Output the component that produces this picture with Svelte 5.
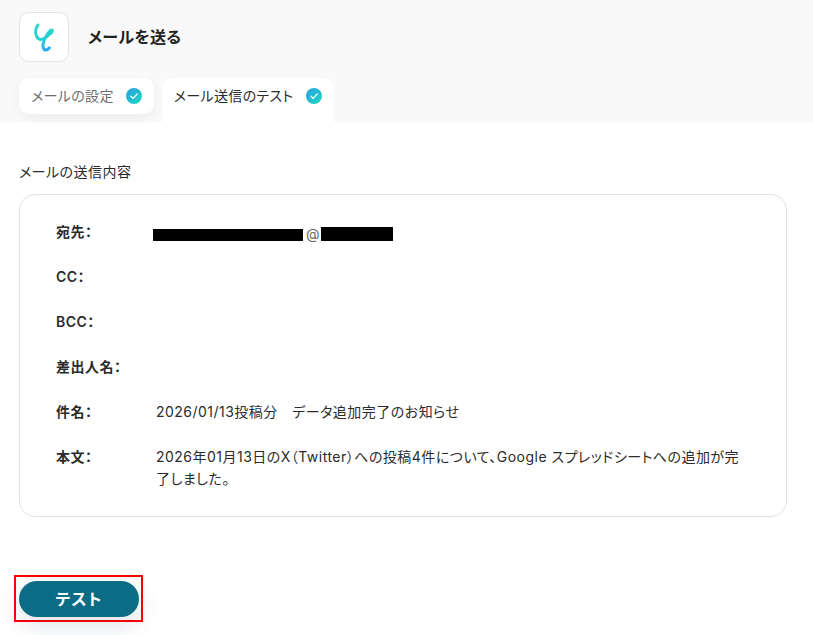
<script lang="ts">
	let rows = [
		{ label: "宛先：", value: "", redacted: true },
		{ label: "CC：", value: "" },
		{ label: "BCC：", value: "" },
		{ label: "差出人名：", value: "" },
		{ label: "件名：", value: "2026/01/13投稿分　データ追加完了のお知らせ" },
		{
			label: "本文：",
			value: "2026年01月13日のX（Twitter）への投稿4件について、Google スプレッドシートへの追加が完了しました。",
		},
	];
</script>

<svg class="defs" width="0" height="0" aria-hidden="true">
	<defs>
		<linearGradient id="check" x1="0" y1="0" x2="1" y2="1">
			<stop offset="0" stop-color="#2a9fe2" />
			<stop offset="1" stop-color="#1ddcc0" />
		</linearGradient>
		<linearGradient id="logo" x1="0" y1="0" x2="0" y2="1">
			<stop offset="0" stop-color="#2ed8c8" />
			<stop offset="0.65" stop-color="#22cfd8" />
			<stop offset="1" stop-color="#22a8f0" />
		</linearGradient>
	</defs>
</svg>

<div class="page">
	<header class="head">
		<div class="title-row">
			<div class="logo">
				<svg width="28" height="32" viewBox="0 0 28 32" fill="none">
					<path
						d="M8 4C5.5 7 4.5 12 7 16C9 19.5 13 19 17 15.5C20.5 12.5 23.5 10 22 9C20 8 14.5 17 13.2 22.5C12.4 26 13.5 29 15.5 29C17 29 18.5 28 19.5 26.8"
						stroke="url(#logo)"
						stroke-width="3"
						stroke-linecap="round"
						stroke-linejoin="round"
					/>
				</svg>
			</div>
			<h1>メールを送る</h1>
		</div>
		<div class="tabs">
			<div class="tab">
				<span>メールの設定</span>
				{@render checkmark()}
			</div>
			<div class="tab active">
				<span>メール送信のテスト</span>
				{@render checkmark()}
			</div>
		</div>
	</header>

	<main class="body">
		<h2>メールの送信内容</h2>
		<div class="card">
			{#each rows as row}
				<div class="row">
					<div class="label">{row.label}</div>
					<div class="value">
						{#if row.redacted}
							<span class="mask">
								<span class="bar first"></span>
								<span class="at">@</span>
								<span class="bar second"></span>
							</span>
						{:else}
							{row.value}
						{/if}
					</div>
				</div>
			{/each}
		</div>
		<div class="actions">
			<div class="outline">
				<button class="test">テスト</button>
			</div>
		</div>
	</main>
</div>

{#snippet checkmark()}
	<svg class="check" width="16" height="16" viewBox="0 0 16 16" fill="none">
		<circle cx="8" cy="8" r="8" fill="url(#check)" />
		<path d="M4.9 8.2L7.1 10.3L11.2 6" stroke="#fff" stroke-width="1.2" stroke-linecap="round" stroke-linejoin="round" />
	</svg>
{/snippet}

<style>
	:global(body) {
		background: #fff;
	}
	.defs {
		position: absolute;
	}
	.page {
		width: 813px;
		height: 635px;
		overflow: hidden;
		font-family: Inter, "Noto Sans CJK JP", sans-serif;
		font-feature-settings: "palt";
		letter-spacing: 0.03em;
		color: #2b2b2b;
		background: #fff;
	}
	.head {
		background: #f9f9f9;
		padding: 12px 19px 0;
		height: 110px;
	}
	.title-row {
		display: flex;
		align-items: center;
		gap: 19px;
	}
	.logo {
		width: 50px;
		height: 50px;
		box-sizing: border-box;
		border: 1px solid #e4e4e4;
		border-radius: 10px;
		background: #fff;
		display: flex;
		align-items: center;
		justify-content: center;
	}
	h1 {
		margin: 0;
		font-size: 16px;
		font-weight: 700;
		line-height: 24px;
		letter-spacing: 0.02em;
		color: #222;
	}
	.tabs {
		display: flex;
		gap: 8px;
		margin-top: 16px;
	}
	.tab {
		display: flex;
		align-items: center;
		gap: 12px;
		height: 36px;
		padding: 0 12px;
		border-radius: 10px;
		background: #fff;
		font-size: 14px;
		letter-spacing: 0.025em;
		color: #6e6e6e;
		box-shadow: 0 4px 12px rgba(0, 0, 0, 0.05);
	}
	.tab.active {
		height: 44px;
		align-items: flex-start;
		padding-top: 10px;
		box-sizing: border-box;
		border-radius: 10px 10px 0 0;
		color: #2b2b2b;
		box-shadow: none;
	}
	.tab span {
		line-height: 16px;
	}
	.check {
		flex: none;
	}
	.body {
		padding: 40px 26px 0 19px;
	}
	h2 {
		margin: 0 0 12px;
		font-size: 14px;
		font-weight: 400;
		line-height: 20px;
		color: #2b2b2b;
	}
	.card {
		border: 1px solid #e2e2e2;
		border-radius: 16px;
		padding: 26px 36px 16px;
		height: 323px;
		box-sizing: border-box;
		width: 768px;
	}
	.row {
		display: flex;
		min-height: 45px;
		font-size: 14px;
		line-height: 22px;
	}
	.label {
		width: 100px;
		flex: none;
		font-weight: 600;
		color: #2b2b2b;
	}
	.value {
		flex: 1;
		padding-right: 8px;
		color: #2b2b2b;
	}
	.mask {
		display: flex;
		align-items: center;
		height: 22px;
		margin-left: -3px;
		position: relative;
		top: 2px;
	}
	.bar {
		background: #000;
		display: block;
	}
	.bar.first {
		width: 150px;
		height: 12px;
		margin-top: 1px;
	}
	.bar.second {
		width: 72px;
		height: 14px;
	}
	.at {
		width: 18px;
		padding-left: 3px;
		box-sizing: border-box;
		font-size: 14px;
		line-height: 14px;
		color: #666;
	}
	.actions {
		margin-top: 58px;
	}
	.outline {
		width: 129px;
		height: 47px;
		box-sizing: border-box;
		margin-left: -5px;
		border: 2px solid #f00;
		padding: 4px 0 0 3px;
	}
	.test {
		display: block;
		width: 120px;
		height: 36px;
		padding: 0 0 3px;
		border: 0;
		border-radius: 18px;
		background: #0c6b85;
		color: #fff;
		font-family: inherit;
		font-feature-settings: inherit;
		font-size: 16px;
		font-weight: 700;
		letter-spacing: 0.08em;
		box-shadow: 0 8px 24px rgba(30, 50, 80, 0.14);
	}
</style>
